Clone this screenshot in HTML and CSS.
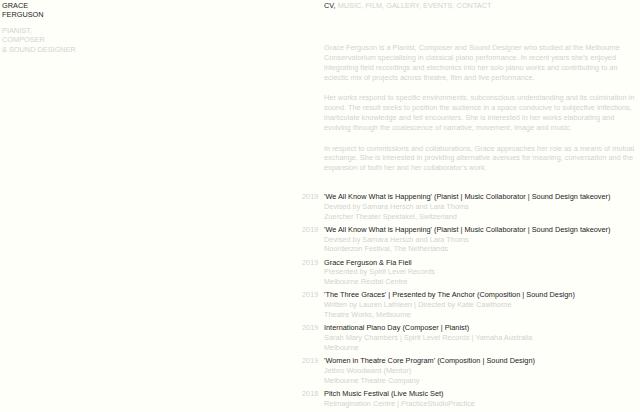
FILE: index.html
```html
<!DOCTYPE html>
<html lang="en">
<head>
<meta charset="utf-8">
<title>Grace Ferguson — CV</title>
<link rel="stylesheet" href="styles.css">
</head>
<body>
<div class="page">
  <aside class="side">
    <h1 class="name">GRACE<br>FERGUSON</h1>
    <p class="roles">PIANIST,<br>COMPOSER<br>&amp; SOUND DESIGNER</p>
  </aside>
  <main class="main">
    <nav class="nav"><a class="current" href="#">CV,</a> <a href="#">MUSIC,</a> <a href="#">FILM,</a> <a href="#">GALLERY,</a> <a href="#">EVENTS,</a> <a href="#">CONTACT</a></nav>
    <section class="bio">
      <p>Grace Ferguson is a Pianist, Composer and Sound Designer who studied at the Melbourne Conservatorium specialising in classical piano performance. In recent years she's enjoyed integrating field recordings and electronics into her solo piano works and contributing to an eclectic mix of projects across theatre, film and live performance.</p>
      <p>Her works respond to specific environments, subconscious understanding and its culmination in sound. The result seeks to position the audience in a space conducive to subjective inflections, inarticulate knowledge and felt encounters. She is interested in her works elaborating and evolving through the coalescence of narrative, movement, image and music.</p>
      <p>In respect to commissions and collaborations, Grace approaches her role as a means of mutual exchange. She is interested in providing alternative avenues for meaning, conversation and the expansion of both her and her collaborator's work.</p>
    </section>
    <ul class="cv">
      <li class="item"><span class="year">2019</span><div class="info"><span class="title">'We All Know What is Happening' (Pianist | Music Collaborator | Sound Design takeover)</span><span>Devised by Samara Hersch and Lara Thoms</span><span>Zuercher Theater Spektakel, Switzerland</span></div></li>
      <li class="item"><span class="year">2019</span><div class="info"><span class="title">'We All Know What is Happening' (Pianist | Music Collaborator | Sound Design takeover)</span><span>Devised by Samara Hersch and Lara Thoms</span><span>Noorderzon Festival, The Netherlands</span></div></li>
      <li class="item"><span class="year">2019</span><div class="info"><span class="title">Grace Ferguson &amp; Fia Fiell</span><span>Presented by Spirit Level Records</span><span>Melbourne Recital Centre</span></div></li>
      <li class="item"><span class="year">2019</span><div class="info"><span class="title">'The Three Graces' | Presented by The Anchor (Composition | Sound Design)</span><span>Written by Lauren Lathleen | Directed by Katie Cawthorne</span><span>Theatre Works, Melbourne</span></div></li>
      <li class="item"><span class="year">2019</span><div class="info"><span class="title">International Piano Day (Composer | Pianist)</span><span>Sarah Mary Chambers | Spirit Level Records | Yamaha Australia</span><span>Melbourne</span></div></li>
      <li class="item"><span class="year">2019</span><div class="info"><span class="title">'Women in Theatre Core Program' (Composition | Sound Design)</span><span>Jethro Woodward (Mentor)</span><span>Melbourne Theatre Company</span></div></li>
      <li class="item"><span class="year">2018</span><div class="info"><span class="title">Pitch Music Festival (Live Music Set)</span><span>Reimagination Centre | PracticeStudioPractice</span></div></li>
    </ul>
  </main>
</div>
</body>
</html>
```
FILE: styles.css
```css
html, body {
  margin: 0;
  padding: 0;
  background: #fffffa;
}
body {
  font-family: "Liberation Sans", Arial, sans-serif;
  font-size: 7.35px;
  line-height: 9.8px;
  color: #d2d2cf;
}
.page {
  display: flex;
  padding: 0.5px 0 0 2px;
}
.side {
  width: 322px;
  flex: none;
  line-height: 9.4px;
}
.name {
  margin: 0;
  font-size: inherit;
  font-weight: normal;
  color: #222;
}
.roles {
  margin: 6.5px 0 0;
}
.main {
  width: 312px;
}
.nav a {
  color: #d2d2cf;
  text-decoration: none;
}
.nav a.current {
  color: #222;
}
.bio {
  margin-top: 33px;
}
.bio p {
  margin: 0 0 11px;
}
.cv {
  list-style: none;
  margin: 19px 0 0 -22px;
  padding: 0;
  display: flex;
  flex-direction: column;
  gap: 3.4px;
}
.item {
  display: grid;
  grid-template-columns: 22px 1fr;
}
.info {
  display: flex;
  flex-direction: column;
}
.title {
  color: #222;
}
```
